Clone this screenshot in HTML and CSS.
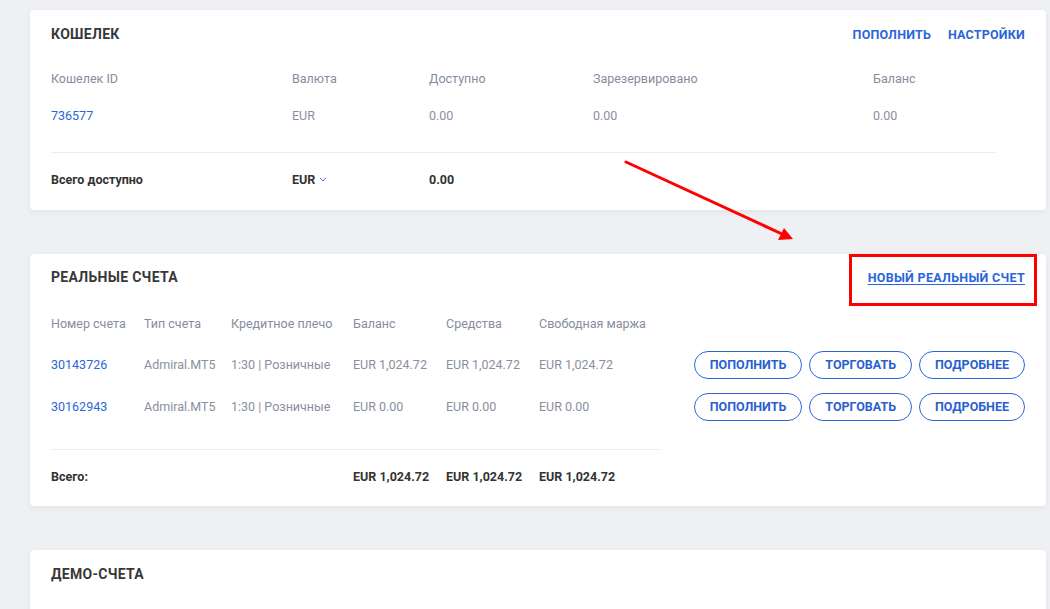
FILE: index.html
```html
<!DOCTYPE html>
<html lang="ru">
<head>
<meta charset="utf-8">
<title>Счета</title>
<link rel="stylesheet" href="styles.css">
</head>
<body>
<main class="page">
  <section class="card wallet">
    <div class="card-head">
      <h2 class="card-title">КОШЕЛЕК</h2>
      <nav class="head-links">
        <a class="head-link" href="#">ПОПОЛНИТЬ</a>
        <a class="head-link" href="#">НАСТРОЙКИ</a>
      </nav>
    </div>
    <div class="wallet-grid">
      <div class="lbl">Кошелек ID</div>
      <div class="lbl">Валюта</div>
      <div class="lbl">Доступно</div>
      <div class="lbl">Зарезервировано</div>
      <div class="lbl">Баланс</div>
      <div class="val"><a class="num" href="#">736577</a></div>
      <div class="val">EUR</div>
      <div class="val">0.00</div>
      <div class="val">0.00</div>
      <div class="val">0.00</div>
    </div>
    <div class="wallet-divider"></div>
    <div class="wallet-total">
      <div class="strong">Всего доступно</div>
      <div class="strong currency">EUR <svg class="chev" width="8" height="5" viewBox="0 0 8 5"><path d="M1 1l3 3 3-3" fill="none" stroke="#4a6fd0" stroke-width="1"/></svg></div>
      <div class="strong">0.00</div>
      <div></div>
      <div></div>
    </div>
  </section>

  <section class="card real">
    <div class="card-head">
      <h2 class="card-title">РЕАЛЬНЫЕ СЧЕТА</h2>
      <a class="new-link" href="#">НОВЫЙ РЕАЛЬНЫЙ СЧЕТ</a>
    </div>
    <div class="acc-grid">
      <div class="lbl">Номер счета</div>
      <div class="lbl">Тип счета</div>
      <div class="lbl">Кредитное плечо</div>
      <div class="lbl">Баланс</div>
      <div class="lbl">Средства</div>
      <div class="lbl">Свободная маржа</div>
      <div></div>

      <div class="val"><a class="num" href="#">30143726</a></div>
      <div class="val">Admiral.MT5</div>
      <div class="val">1:30 | Розничные</div>
      <div class="val">EUR 1,024.72</div>
      <div class="val">EUR 1,024.72</div>
      <div class="val">EUR 1,024.72</div>
      <div class="actions">
        <a class="btn" href="#">ПОПОЛНИТЬ</a>
        <a class="btn" href="#">ТОРГОВАТЬ</a>
        <a class="btn" href="#">ПОДРОБНЕЕ</a>
      </div>

      <div class="val"><a class="num" href="#">30162943</a></div>
      <div class="val">Admiral.MT5</div>
      <div class="val">1:30 | Розничные</div>
      <div class="val">EUR 0.00</div>
      <div class="val">EUR 0.00</div>
      <div class="val">EUR 0.00</div>
      <div class="actions">
        <a class="btn" href="#">ПОПОЛНИТЬ</a>
        <a class="btn" href="#">ТОРГОВАТЬ</a>
        <a class="btn" href="#">ПОДРОБНЕЕ</a>
      </div>

      <div class="acc-divider"></div>

      <div class="strong total">Всего:</div>
      <div class="total"></div>
      <div class="total"></div>
      <div class="strong total">EUR 1,024.72</div>
      <div class="strong total">EUR 1,024.72</div>
      <div class="strong total">EUR 1,024.72</div>
      <div class="total"></div>
    </div>
  </section>

  <section class="card demo">
    <div class="card-head">
      <h2 class="card-title">ДЕМО-СЧЕТА</h2>
    </div>
  </section>

  <div class="highlight-box"></div>
  <svg class="arrow" width="1050" height="609" viewBox="0 0 1050 609">
    <line x1="626" y1="162" x2="782" y2="234" stroke="#ff0000" stroke-width="3" stroke-linecap="round"/>
    <polygon points="793,239 778,240 784,228" fill="#ff0000"/>
  </svg>
</main>
</body>
</html>
```

FILE: styles.css
```css
* { box-sizing: border-box; }

html, body {
  margin: 0;
  padding: 0;
  height: 100%;
  overflow: hidden;
}

body {
  background: #eff0f3;
  font-family: Roboto, "Noto Sans", "Liberation Sans", sans-serif;
  font-size: 12.5px;
  color: #3b3b3b;
}

.page {
  position: relative;
  padding: 10px 4px 0 30px;
  display: flex;
  flex-direction: column;
  gap: 44px;
}

.card {
  background: #ffffff;
  border-radius: 4px;
  box-shadow: 0 2px 6px rgba(30, 40, 70, 0.06);
  padding: 0 21px;
}

.card-head {
  display: flex;
  justify-content: space-between;
  align-items: center;
  height: 20px;
}

.card-title {
  margin: 0;
  font-size: 14px;
  font-weight: 700;
  letter-spacing: 0.3px;
  color: #383838;
  line-height: 20px;
}

.head-links {
  display: flex;
  gap: 17px;
}

.head-link,
.new-link {
  font-size: 12.5px;
  font-weight: 700;
  color: #2a66d9;
  text-decoration: none;
  letter-spacing: 0.2px;
}

.new-link {
  text-decoration: underline;
  text-underline-offset: 2px;
  letter-spacing: 0.3px;
}

a.num {
  color: #2a66d9;
  text-decoration: none;
}

.lbl {
  color: #878c9e;
}

.val {
  color: #8a8fa0;
}

.strong {
  font-weight: 700;
  color: #333333;
}

/* wallet card */
.wallet {
  padding-top: 14px;
  padding-bottom: 5px;
}

.wallet-grid {
  margin-top: 16px;
  display: grid;
  grid-template-columns: 241px 137px 164px 280px 123px;
  grid-auto-rows: 37px;
  align-items: center;
}

.wallet-divider {
  margin-top: 18px;
  width: 945px;
  height: 1px;
  background: #ededf0;
}

.wallet-total {
  display: grid;
  grid-template-columns: 241px 137px 164px 280px 123px;
  height: 52px;
  align-items: center;
}

.currency {
  display: flex;
  align-items: center;
  gap: 4px;
}

.chev {
  display: block;
}

/* real accounts card */
.real {
  padding-top: 13px;
  padding-bottom: 4px;
}

.acc-grid {
  margin-top: 15px;
  display: grid;
  grid-template-columns: 93px 87px 122px 93px 93px 121px 1fr;
  grid-template-rows: 42px 41px 43px 21px 1px 52px;
  align-items: center;
}

.acc-divider {
  grid-column: 1 / 7;
  grid-row: 5;
  height: 1px;
  background: #ededf0;
  align-self: stretch;
}

.total {
  grid-row: 6;
}

.actions {
  display: flex;
  justify-content: flex-end;
  gap: 7px;
}

.btn {
  display: inline-flex;
  align-items: center;
  justify-content: center;
  height: 28px;
  padding: 0 15px;
  border: 1px solid #2a66d9;
  border-radius: 14px;
  color: #2a5fd0;
  font-size: 12.5px;
  font-weight: 700;
  text-decoration: none;
  letter-spacing: 0;
}

/* demo card */
.demo {
  padding-top: 14px;
  height: 100px;
}

/* annotation overlay */
.highlight-box {
  position: absolute;
  left: 849px;
  top: 254px;
  width: 188px;
  height: 52px;
  border: 3px solid #ff0000;
  pointer-events: none;
}

.arrow {
  position: absolute;
  left: 0;
  top: 0;
  pointer-events: none;
}
```
